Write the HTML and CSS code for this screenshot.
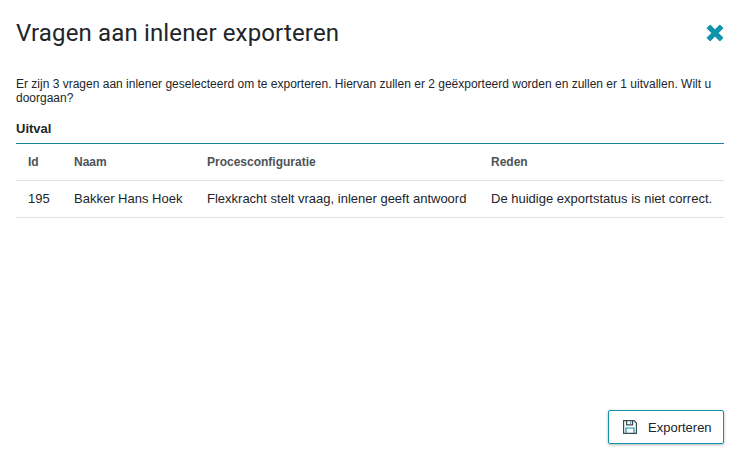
FILE: index.html
```html
<!DOCTYPE html>
<html lang="nl">
<head>
<meta charset="utf-8">
<title>Vragen aan inlener exporteren</title>
<link rel="stylesheet" href="styles.css">
</head>
<body>
<div class="dialog">
  <header class="head">
    <h1 class="title">Vragen aan inlener exporteren</h1>
    <svg class="close" width="18" height="18" viewBox="0 0 18 18" aria-label="Sluiten"><path d="M1 4.2 4.2 1 9 5.8 13.8 1 17 4.2 12.2 9 17 13.8 13.8 17 9 12.2 4.2 17 1 13.8 5.8 9 1 4.2Z" fill="#0f94ad" stroke="#0f94ad" stroke-width="1" stroke-linejoin="round"/></svg>
  </header>
  <p class="intro">Er zijn 3 vragen aan inlener geselecteerd om te exporteren. Hiervan zullen er 2 geëxporteerd worden en zullen er 1 uitvallen. Wilt u doorgaan?</p>
  <h2 class="sub">Uitval</h2>
  <table class="grid">
    <thead>
      <tr><th class="c-id">Id</th><th class="c-naam">Naam</th><th class="c-proc">Procesconfiguratie</th><th>Reden</th></tr>
    </thead>
    <tbody>
      <tr><td>195</td><td>Bakker Hans Hoek</td><td>Flexkracht stelt vraag, inlener geeft antwoord</td><td>De huidige exportstatus is niet correct.</td></tr>
    </tbody>
  </table>
  <footer class="foot">
    <button class="btn" type="button">
      <svg class="save" width="16" height="16" viewBox="0 0 16 16" fill="none" stroke="#3f4a50" stroke-width="1.2"><path d="M1.6 1.6H12L14.4 4V14.4H1.6Z" stroke-linejoin="round"/><path d="M4.6 1.8V5.8H10.6V1.8"/><path d="M8.6 2.8V4.8" stroke="#0f94ad"/><path d="M4 14.2V9H12V14.2" stroke="#0f94ad"/></svg>
      <span>Exporteren</span>
    </button>
  </footer>
</div>
</body>
</html>
```
FILE: styles.css
```css
* { box-sizing: border-box; }
html, body { margin: 0; height: 100%; }
body { background: #fff; color: #212529; font-family: "Liberation Sans", Arial, sans-serif; font-size: 12px; }
.dialog { width: 746px; height: 450px; padding: 0 22px 0 16px; display: flex; flex-direction: column; }
.head { display: flex; justify-content: space-between; align-items: center; height: 65px; }
.title { margin: 0; font-family: Roboto, sans-serif; font-size: 24px; font-weight: 400; letter-spacing: 0.14px; line-height: 32px; color: #212529; }
.close { flex: none; }
.intro { margin: 12px 0 0; font-size: 12px; line-height: 14px; width: 708px; }
.sub { margin: 17px 0 0; font-size: 13px; font-weight: 700; line-height: 14px; }
.grid { width: 708px; margin-top: 7px; border-collapse: collapse; border-top: 1px solid #1a7f9c; table-layout: fixed; }
.grid th { height: 37px; padding: 0 12px; font-weight: 700; font-size: 12px; color: #4d5358; text-align: left; border-bottom: 1px solid #dee2e6; }
.grid td { height: 37px; padding: 0 12px 2px; font-size: 13px; white-space: nowrap; border-bottom: 1px solid #dee2e6; }
.c-id { width: 46px; }
.c-naam { width: 133px; }
.c-proc { width: 284px; }
.foot { margin-top: auto; display: flex; justify-content: flex-end; padding-bottom: 6px; }
.btn { width: 116px; height: 34px; display: flex; align-items: center; gap: 10px; padding: 0 0 0 13px; background: #fff; border: 1px solid #0f94ad; border-radius: 2px; box-shadow: 0 1px 3px rgba(0,0,0,.3); font: 400 13px "Liberation Sans", Arial, sans-serif; color: #212529; }
```
